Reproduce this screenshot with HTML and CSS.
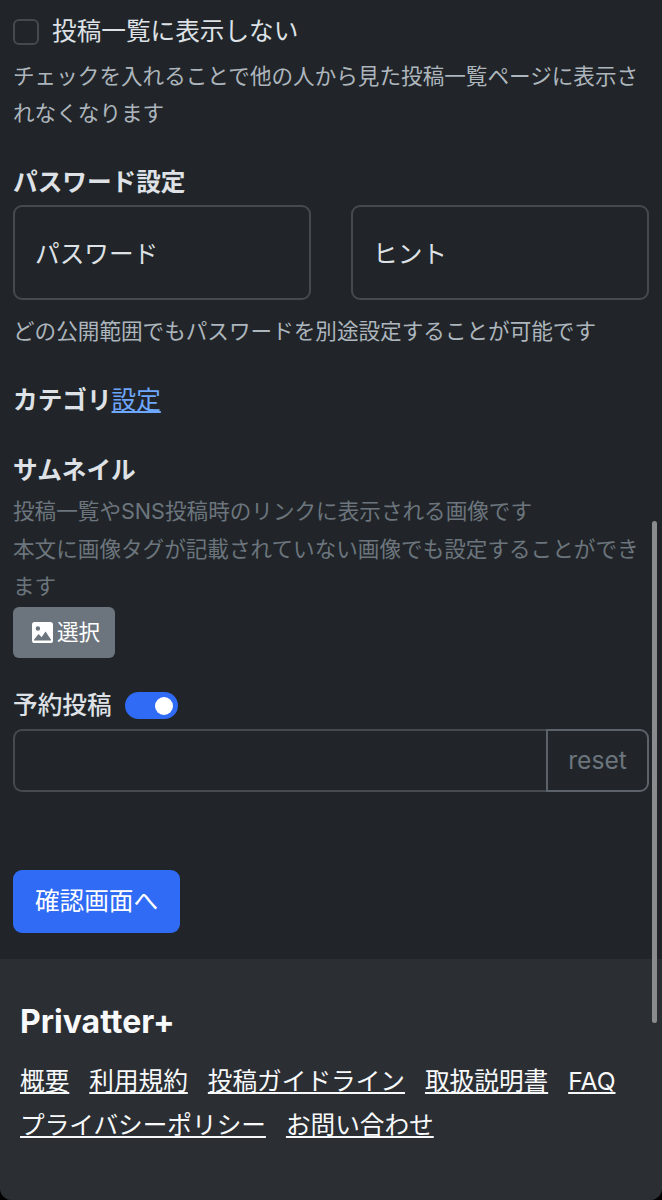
FILE: index.html
```html
<!DOCTYPE html>
<html lang="ja">
<head>
<meta charset="utf-8">
<title>Privatter+</title>
<link rel="stylesheet" href="styles.css">
</head>
<body>
<div class="page">
  <main class="main">
    <div class="check-row">
      <span class="checkbox"></span>
      <span>投稿一覧に表示しない</span>
    </div>
    <p class="help help-check">チェックを入れることで他の人から見た投稿一覧ページに表示されなくなります</p>

    <h2 class="label label-password">パスワード設定</h2>
    <div class="pass-grid">
      <div class="field">パスワード</div>
      <div class="field">ヒント</div>
    </div>
    <p class="help help-pass">どの公開範囲でもパスワードを別途設定することが可能です</p>

    <h2 class="label label-cat">カテゴリ<a href="#" class="cat-link">設定</a></h2>

    <h2 class="label label-thumb">サムネイル</h2>
    <p class="help muted">投稿一覧やSNS投稿時のリンクに表示される画像です<br>本文に画像タグが記載されていない画像でも設定することができます</p>
    <button class="btn-select">
      <svg class="icon" viewBox="0 0 16 16" width="21" height="21"><path fill="#fff" fill-rule="evenodd" d="M2 0a2 2 0 0 0-2 2v12a2 2 0 0 0 2 2h12a2 2 0 0 0 2-2V2a2 2 0 0 0-2-2H2zm2.5 3.2a1.7 1.7 0 1 1 0 3.4 1.7 1.7 0 0 1 0-3.4zM1.5 13.6 5 9.2l2.3 2.5 3-4.4 4.2 6.3v.4h-13v-.4z"/></svg>
      <span>選択</span>
    </button>

    <div class="sched-row">
      <h2 class="label label-sched">予約投稿</h2>
      <span class="switch"><span class="knob"></span></span>
    </div>
    <div class="input-group">
      <div class="input-main"></div>
      <div class="input-reset">reset</div>
    </div>

    <button class="btn-confirm">確認画面へ</button>
  </main>

  <footer class="footer">
    <div class="brand">Privatter+</div>
    <nav class="foot-links">
      <a href="#">概要</a>
      <a href="#">利用規約</a>
      <a href="#">投稿ガイドライン</a>
      <a href="#">取扱説明書</a>
      <a href="#">FAQ</a>
      <a href="#">プライバシーポリシー</a>
      <a href="#">お問い合わせ</a>
    </nav>
  </footer>
  <div class="scrollbar"></div>
</div>
</body>
</html>
```
FILE: styles.css
```css
* { box-sizing: border-box; }
html, body { margin: 0; padding: 0; background: #000; }
body {
  width: 662px;
  height: 1200px;
  overflow: hidden;
  font-family: Inter, "Noto Sans CJK JP", sans-serif;
  font-size: 24.65px;
  line-height: 1.5;
  color: #dee2e6;
}
.page {
  position: relative;
  height: 1200px;
  display: flex;
  flex-direction: column;
  background: #212529;
  border-radius: 0 0 12px 12px;
  overflow: hidden;
}
.main {
  height: 959px;
  padding: 13px 13px 0;
  flex: none;
}
.check-row {
  display: flex;
  align-items: center;
  gap: 13px;
  height: 37px;
}
.checkbox {
  width: 26px;
  height: 26px;
  border: 2px solid #454a50;
  border-radius: 6px;
  background: #212529;
}
.help {
  margin: 0;
  font-size: 21.6px;
  line-height: 37px;
  color: #adb5bd;
}
.help-check { margin-top: 8px; }
.muted {
  margin-top: 4px;
  line-height: 37.5px;
  color: #6c757d;
}
.label {
  margin: 0;
  font-size: 24.65px;
  line-height: 37px;
  font-weight: 700;
  color: #dee2e6;
}
.label-sched { font-weight: 500; }
.label-password { margin-top: 32px; }
.pass-grid {
  display: grid;
  grid-template-columns: 298px 298px;
  justify-content: space-between;
  margin-top: 4px;
}
.field {
  height: 95px;
  padding: 3px 20px 0;
  display: flex;
  align-items: center;
  border: 2px solid #454a50;
  border-radius: 9px;
}
.help-pass { margin-top: 13px; }
.label-cat { margin-top: 32px; }
.cat-link { color: #6ea8fe; font-weight: 400; text-decoration: underline; }
.label-thumb { margin-top: 33px; }
.btn-select {
  display: flex;
  align-items: center;
  gap: 4px;
  width: 102px;
  height: 51px;
  padding: 0 0 0 19px;
  margin-top: 1.5px;
  border: 0;
  border-radius: 6px;
  background: #6c757d;
  color: #fff;
  font: inherit;
  font-size: 21.6px;
}
.icon { display: block; flex: none; }
.sched-row {
  display: flex;
  align-items: center;
  gap: 13px;
  margin-top: 29px;
}
.switch {
  display: flex;
  align-items: center;
  justify-content: flex-end;
  width: 53px;
  height: 27px;
  padding-right: 5px;
  border-radius: 14px;
  background: #2f6bf5;
}
.knob {
  width: 18px;
  height: 18px;
  border-radius: 50%;
  background: #fff;
}
.input-group {
  display: flex;
  height: 63px;
  margin-top: 5px;
}
.input-main {
  flex: 1;
  border: 2px solid #454a50;
  border-right: 0;
  border-radius: 9px 0 0 9px;
}
.input-reset {
  width: 103px;
  display: flex;
  align-items: center;
  justify-content: center;
  border: 2px solid #5c6269;
  border-radius: 0 9px 9px 0;
  color: #6c757d;
}
.btn-confirm {
  display: block;
  width: 167px;
  height: 63px;
  margin-top: 78px;
  border: 0;
  border-radius: 9px;
  background: #2f6bf5;
  color: #fff;
  font: inherit;
}
.footer {
  flex: 1;
  padding: 41px 20px 0;
  background: #2b2f34;
}
.brand {
  font-size: 32px;
  line-height: 44px;
  font-weight: 700;
  color: #f8f9fa;
}
.foot-links {
  display: flex;
  flex-wrap: wrap;
  column-gap: 20px;
  margin-top: 15px;
}
.foot-links a {
  line-height: 44px;
  color: #f8f9fa;
  text-decoration: underline;
}
.scrollbar {
  position: absolute;
  top: 521px;
  left: 652px;
  width: 5px;
  height: 502px;
  border-radius: 3px;
  background: #8a8b8e;
}
```
